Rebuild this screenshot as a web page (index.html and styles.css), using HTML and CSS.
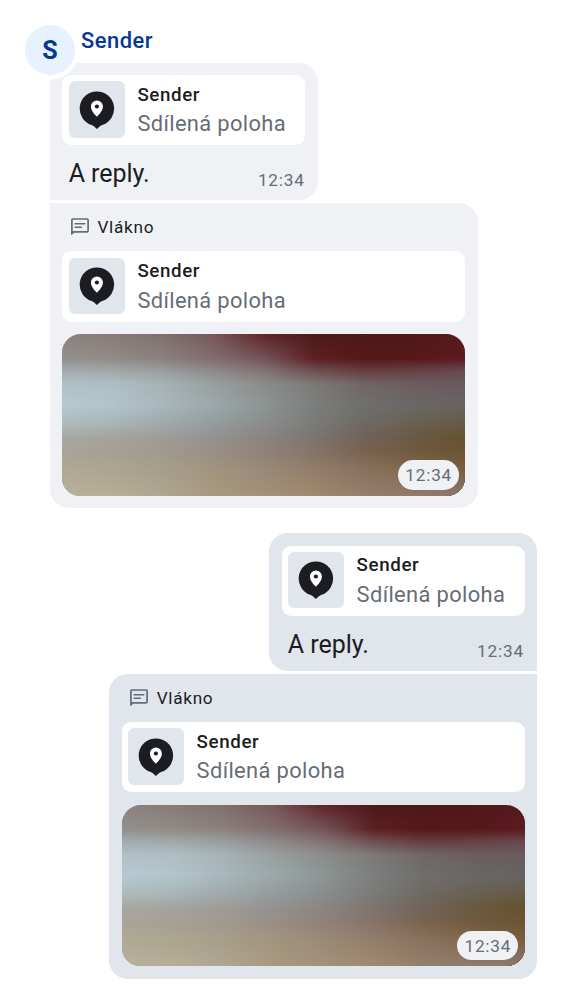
FILE: index.html
```html
<!DOCTYPE html>
<html lang="cs">
<head>
<meta charset="utf-8">
<title>Konverzace</title>
<link rel="stylesheet" href="styles.css">
</head>
<body>
<svg class="defs" aria-hidden="true">
  <symbol id="pin" viewBox="0 0 36 42">
    <path d="M17.900.4a17.200 17.200 0 0 0-5.200 33.600c1 .4 1.800.8 2.500 1.500l2.700 2.500 2.700-2.500c.7-.7 1.500-1.100 2.500-1.500A17.200 17.200 0 0 0 17.900.4Z" fill="#1b1d22"/>
    <path d="M17.900 9.500a6 6 0 0 0-6 6c0 4.200 3.800 8 6 10.300 2.200-2.300 6-6.100 6-10.300a6 6 0 0 0-6-6Z" fill="#fff"/>
    <circle cx="17.900" cy="15.500" r="2.100" fill="#1b1d22"/>
  </symbol>
  <symbol id="thread" viewBox="0 0 20 20">
    <path d="M1.900 16.600V3a1 1 0 0 1 1-1h14.200a1 1 0 0 1 1 1v10.800a1 1 0 0 1-1 1H4.300Z" fill="none" stroke="#656d77" stroke-width="1.700" stroke-linejoin="round"/>
    <path d="M1.100 14v4.200l3.700-3.700Z" fill="#656d77"/>
    <path d="M5.200 6.700h9.600M5.200 10.300h6.200" stroke="#656d77" stroke-width="1.600" stroke-linecap="round"/>
  </symbol>
</svg>
<main class="timeline">
  <section class="group incoming">
    <header class="sender"><span class="avatar">S</span><span class="name">Sender</span></header>
    <article class="bubble short first">
      <div class="reply"><div class="thumb"><svg class="pin"><use href="#pin"/></svg></div><div class="reply-text"><b>Sender</b><span>Sdílená poloha</span></div></div>
      <div class="body"><p>A reply.</p><time>12:34</time></div>
    </article>
    <article class="bubble wide last">
      <div class="thread"><svg class="thread-icon"><use href="#thread"/></svg><span>Vlákno</span></div>
      <div class="reply"><div class="thumb"><svg class="pin"><use href="#pin"/></svg></div><div class="reply-text"><b>Sender</b><span>Sdílená poloha</span></div></div>
      <div class="photo"><i class="r0"></i><i class="r1"></i><i class="r2"></i><i class="r3"></i><i class="r4"></i><i class="r5"></i><i class="r6"></i><i class="r7"></i><i class="r8"></i><i class="r9"></i><time>12:34</time></div>
    </article>
  </section>
  <section class="group outgoing">
    <article class="bubble short first">
      <div class="reply"><div class="thumb"><svg class="pin"><use href="#pin"/></svg></div><div class="reply-text"><b>Sender</b><span>Sdílená poloha</span></div></div>
      <div class="body"><p>A reply.</p><time>12:34</time></div>
    </article>
    <article class="bubble wide last">
      <div class="thread"><svg class="thread-icon"><use href="#thread"/></svg><span>Vlákno</span></div>
      <div class="reply"><div class="thumb"><svg class="pin"><use href="#pin"/></svg></div><div class="reply-text"><b>Sender</b><span>Sdílená poloha</span></div></div>
      <div class="photo"><i class="r0"></i><i class="r1"></i><i class="r2"></i><i class="r3"></i><i class="r4"></i><i class="r5"></i><i class="r6"></i><i class="r7"></i><i class="r8"></i><i class="r9"></i><time>12:34</time></div>
    </article>
  </section>
</main>
</body>
</html>
```
FILE: styles.css
```css
* { box-sizing: border-box; }
body { margin: 0; background: #fff; color: #1b1d22; font-family: Roboto, "Liberation Sans", sans-serif; }
.defs { position: absolute; width: 0; height: 0; }
.timeline { width: 562px; height: 1000px; padding: 25px 25px 0; overflow: hidden; }
.group { display: flex; flex-direction: column; gap: 3.200px; }
.incoming { padding-left: 25px; align-items: flex-start; }
.outgoing { margin-top: 25.300px; align-items: flex-end; }

.sender { display: flex; height: 50px; margin: 0 0 -15.500px -25px; gap: 6px; position: relative; z-index: 1; }
.avatar { width: 50px; height: 50px; border-radius: 50%; background: #e7f2ff; box-shadow: 0 0 0 4.700px #fff; color: #043894; font-size: 25px; font-weight: 700; line-height: 51px; text-align: center; }
.name { color: #043894; font-size: 21.900px; font-weight: 500; line-height: 31px; letter-spacing: .5px; }

.bubble { padding: 12.500px 12.600px 12.500px 12.400px; background: #f0f1f5; }
.outgoing .bubble { padding-right: 12.400px; padding-left: 12.600px; background: #e1e5ec; }
.short { width: 268px; height: 137.200px; }
.wide { width: 428px; height: 305px; }
.incoming .first { border-radius: 18.750px 18.750px 18.750px 0; }
.incoming .last { border-radius: 0 18.750px 18.750px 18.750px; }
.outgoing .first { border-radius: 18.750px 18.750px 0 18.750px; }
.outgoing .last { border-radius: 18.750px 0 18.750px 18.750px; }

.reply { display: flex; align-items: flex-start; gap: 12.500px; height: 70.400px; padding: 6.400px 6.250px 0; border-radius: 9.400px; background: #fff; }
.short .reply { height: 70px; padding-top: 6.200px; }
.thumb { display: grid; place-items: center; width: 56.250px; height: 56.250px; border-radius: 6.250px; background: #e1e5ec; }
.pin { width: 36px; height: 42px; margin-top: 4px; }
.reply-text { display: flex; flex-direction: column; margin-top: -.6px; white-space: nowrap; }
.reply-text b { font-size: 18.750px; font-weight: 500; line-height: 28px; letter-spacing: .6px; }
.reply-text span { margin-top: -.6px; color: #656d77; font-size: 21.900px; line-height: 31px; letter-spacing: .35px; }

.body { display: flex; justify-content: space-between; padding: 10.300px 0 0 6.250px; }
.body p { margin: .7px 0 0; font-size: 25px; line-height: 36px; letter-spacing: -.05px; }
time { color: #656d77; font-size: 17.200px; line-height: 25px; letter-spacing: .8px; }
.body time { margin: 13px .7px 0 0; }

.thread { display: flex; align-items: center; gap: 7.700px; height: 35.800px; padding: 0 0 12px 7.400px; font-size: 17.200px; letter-spacing: .7px; }
.thread-icon { width: 20px; height: 20px; }

/* Blurred preview: rows of colour, each fading in over the one above it. */
.photo { display: grid; height: 161.500px; margin-top: 12.500px; border-radius: 18.750px; overflow: hidden; }
.photo > * { grid-area: 1 / 1; }
.photo time { z-index: 1; place-self: end; width: 61px; height: 29.500px; margin: 0 6.250px 6.250px 0; border-radius: 15px; background: #f0f1f5; line-height: 30px; text-align: center; }
.photo i { -webkit-mask-image: linear-gradient(transparent var(--from), #000 var(--to)); mask-image: linear-gradient(transparent var(--from), #000 var(--to)); }
.photo .r0 { -webkit-mask-image: none; mask-image: none; background: linear-gradient(90deg, #8b817d, #887b77, #7f706c, #775759, #602428, #4d1a19, #4d1a19, #501919, #551b1e); }
.r1 { --from: 0%; --to: 15%; background: linear-gradient(90deg, #93908c, #918b88, #8a807e, #826d6e, #73545a, #5d2023, #571718, #581819, #5c1a22); }
.r2 { --from: 15%; --to: 23%; background: linear-gradient(90deg, #a3adb0, #a2a9a9, #9a9f9f, #8e8b8b, #837575, #6e5153, #673f42, #664347, #674a50); }
.r3 { --from: 23%; --to: 31%; background: linear-gradient(90deg, #b0c0c6, #afbfc4, #a7b2b5, #9aa09f, #8b8d8b, #7d7978, #706668, #6b5d60, #695b5f); }
.r4 { --from: 31%; --to: 44%; background: linear-gradient(90deg, #b5c9d0, #b2c5cc, #a8b7bc, #9ba8ab, #8d9594, #7b7f7d, #6f6f6d, #6a6766, #676363); }
.r5 { --from: 44%; --to: 56%; background: linear-gradient(90deg, #adb9bb, #a9b3b5, #a1a8a9, #959b9b, #8a8c8c, #7b7a78, #6f6861, #69604f, #665a44); }
.r6 { --from: 56%; --to: 64%; background: linear-gradient(90deg, #a8a8a1, #a4a39e, #9d9c98, #949290, #8a8581, #7d746f, #70635a, #695a42, #65522f); }
.r7 { --from: 64%; --to: 73%; background: linear-gradient(90deg, #a9a497, #a5a095, #a09a8f, #998f86, #90827a, #85746a, #79644f, #705a3f, #6d5533); }
.r8 { --from: 73%; --to: 85%; background: linear-gradient(90deg, #b0aa95, #ada68f, #a89f8b, #a3947f, #9b8a78, #957e6a, #8b735f, #82694f, #7b5f42); }
.r9 { --from: 85%; --to: 100%; background: linear-gradient(90deg, #b7b19b, #b5af98, #aea690, #a8997f, #a49178, #9f8a6e, #947f6c, #8f7c6d, #8c7970); }
```
